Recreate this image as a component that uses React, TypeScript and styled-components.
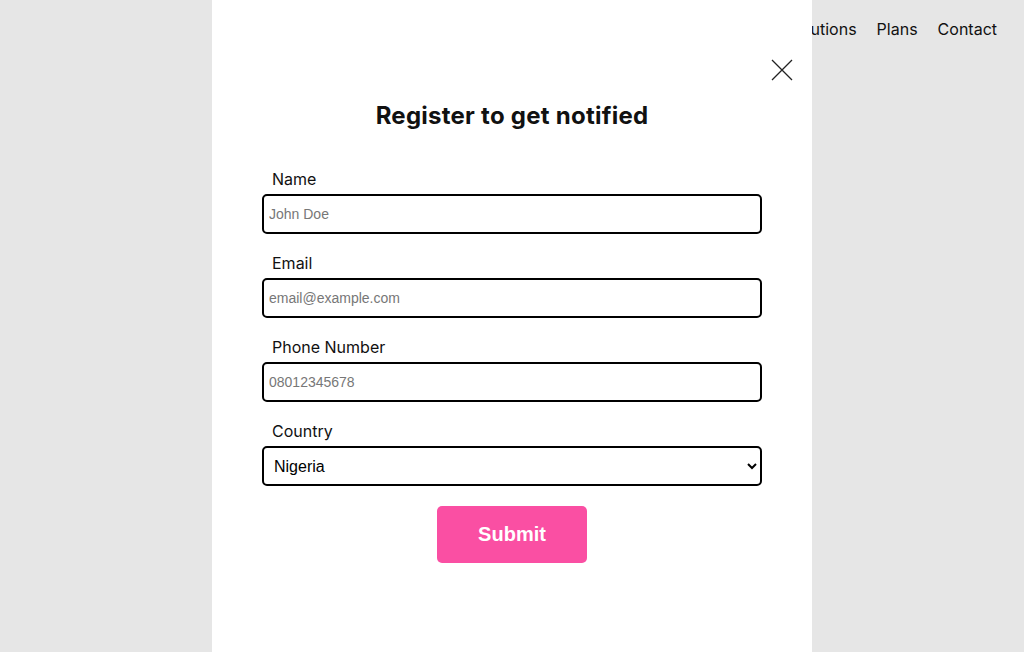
import * as React from "react";
import styled, { createGlobalStyle } from "styled-components";

const GlobalStyle = createGlobalStyle`
  html, body {
    margin: 0;
    padding: 0;
    background: #e6e6e6;
    font-family: "Inter", "Liberation Sans", sans-serif;
  }
`;

const fields = [
  { label: "Name", type: "text", placeholder: "John Doe" },
  { label: "Email", type: "email", placeholder: "email@example.com" },
  { label: "Phone Number", type: "tel", placeholder: "08012345678" },
];

export default function App() {
  return (
    <>
      <GlobalStyle />
      <Page>
        <Header>
          <Nav>
            <NavLink>Home</NavLink>
            <NavLink>About</NavLink>
            <NavLink>Solutions</NavLink>
            <NavLink>Plans</NavLink>
            <NavLink>Contact</NavLink>
          </Nav>
        </Header>
      </Page>
      <Modal>
        <CloseRow>
          <CloseButton aria-label="Close">
            <svg width="22" height="22" viewBox="0 0 22 22">
              <path d="M1 1 L21 21 M21 1 L1 21" stroke="#222" strokeWidth="1.3" fill="none" />
            </svg>
          </CloseButton>
        </CloseRow>
        <Title>Register to get notified</Title>
        <Form onSubmit={(e) => e.preventDefault()}>
          {fields.map((f) => (
            <Field key={f.label}>
              <Label>{f.label}</Label>
              <Input type={f.type} placeholder={f.placeholder} />
            </Field>
          ))}
          <Field>
            <Label>Country</Label>
            <Select defaultValue="Nigeria">
              <option>Nigeria</option>
              <option>Ghana</option>
              <option>Kenya</option>
            </Select>
          </Field>
          <SubmitButton type="submit">Submit</SubmitButton>
        </Form>
      </Modal>
    </>
  );
}

const Page = styled.div`
  min-height: 652px;
`;

const Header = styled.header`
  display: flex;
  justify-content: flex-end;
  padding: 18px 27px 0 0;
`;

const Nav = styled.nav`
  display: flex;
  gap: 20px;
`;

const NavLink = styled.a`
  font-size: 16px;
  line-height: 22px;
  color: #111;
  cursor: pointer;
`;

const Modal = styled.div`
  position: fixed;
  top: 0;
  bottom: 0;
  left: 50%;
  transform: translateX(-50%);
  width: 600px;
  background: #fff;
  box-sizing: border-box;
  padding-top: 59px;
  display: flex;
  flex-direction: column;
  align-items: center;
`;

const CloseRow = styled.div`
  align-self: stretch;
  display: flex;
  justify-content: flex-end;
  padding-right: 19px;
`;

const CloseButton = styled.button`
  background: none;
  border: none;
  padding: 0;
  width: 22px;
  height: 22px;
  cursor: pointer;
  display: block;
`;

const Title = styled.h2`
  margin: 20px 0 0;
  font-size: 24px;
  line-height: 30px;
  font-weight: 700;
  letter-spacing: 0.25px;
  color: #111;
`;

const Form = styled.form`
  width: 500px;
  margin-top: 38px;
  display: flex;
  flex-direction: column;
  gap: 19px;
`;

const Field = styled.div`
  display: flex;
  flex-direction: column;
  gap: 5px;
`;

const Label = styled.label`
  font-size: 16px;
  line-height: 20px;
  padding-left: 10px;
  color: #111;
`;

const Input = styled.input`
  height: 40px;
  box-sizing: border-box;
  border: 2px solid #000;
  border-radius: 5px;
  padding: 0 5px;
  font-family: "Liberation Sans", Arial, sans-serif;
  font-size: 14px;
  color: #111;
  outline: none;
  &::placeholder {
    color: #777;
  }
`;

const Select = styled.select`
  height: 40px;
  box-sizing: border-box;
  border: 2px solid #000;
  border-radius: 5px;
  padding: 0 6px;
  font-family: "Liberation Sans", Arial, sans-serif;
  font-size: 16px;
  color: #000;
  background: #fff;
  outline: none;
`;

const SubmitButton = styled.button`
  align-self: center;
  margin-top: 1px;
  width: 150px;
  height: 57px;
  border: none;
  border-radius: 5px;
  background: #fa4fa3;
  color: #fff;
  font-family: "Liberation Sans", Arial, sans-serif;
  font-weight: 700;
  font-size: 20px;
  cursor: pointer;
`;
